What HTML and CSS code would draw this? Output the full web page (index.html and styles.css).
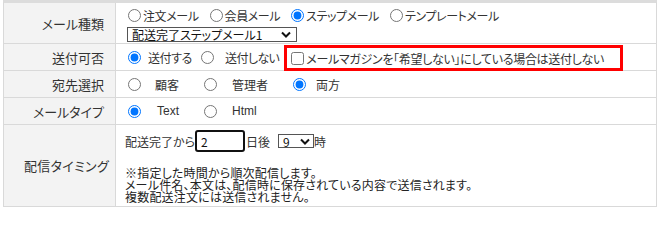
FILE: index.html
```html
<!DOCTYPE html>
<html lang="ja">
<head>
<meta charset="utf-8">
<link rel="stylesheet" href="styles.css">
</head>
<body>
<div class="form">
  <div class="label">メール種類</div>
  <div class="value v-kind">
    <div class="kind-line">
      <label class="opt"><input type="radio" name="kind"><span class="t-kind">注文メール</span></label>
      <label class="opt gap"><input type="radio" name="kind"><span class="t-kind">会員メール</span></label>
      <label class="opt gap"><input type="radio" name="kind" checked><span class="t-kind">ステップメール</span></label>
      <label class="opt gap"><input type="radio" name="kind"><span class="t-kind">テンプレートメール</span></label>
    </div>
    <div class="sel sel-long">
      <span class="sel-text">配送完了ステップメール1</span>
      <svg class="chev" width="10" height="7" viewBox="0 0 10 7"><path d="M1 1.5 L5 5.5 L9 1.5" fill="none" stroke="#111" stroke-width="2"/></svg>
    </div>
  </div>

  <div class="label">送付可否</div>
  <div class="value v-send">
    <label class="opt"><input type="radio" name="send" checked><span class="t-send1">送付する</span></label>
    <label class="opt gap-send"><input type="radio" name="send"><span class="t-send2">送付しない</span></label>
    <label class="mag"><input type="checkbox"><span class="t-mag">メールマガジンを「希望しない」にしている場合は送付しない</span></label>
  </div>

  <div class="label">宛先選択</div>
  <div class="value v-opts">
    <label class="opt col-a"><input type="radio" name="to"><span class="t-a">顧客</span></label>
    <label class="opt col-b"><input type="radio" name="to"><span class="t-b">管理者</span></label>
    <label class="opt"><input type="radio" name="to" checked><span class="t-c">両方</span></label>
  </div>

  <div class="label">メールタイプ</div>
  <div class="value v-opts">
    <label class="opt col-a"><input type="radio" name="type" checked><span class="t-text">Text</span></label>
    <label class="opt"><input type="radio" name="type"><span class="t-html">Html</span></label>
  </div>

  <div class="label label-wide">配信タイミング</div>
  <div class="value v-timing">
    <div class="timing-line">
      <span>配送完了から</span><input class="days" type="text" value="2"><span class="t-after">日後</span>
      <div class="sel sel-hour">
        <span class="sel-text">9</span>
        <svg class="chev" width="10" height="7" viewBox="0 0 10 7"><path d="M1 1.5 L5 5.5 L9 1.5" fill="none" stroke="#111" stroke-width="2"/></svg>
      </div><span>時</span>
    </div>
    <p class="notice">※指定した時間から順次配信します。<br>メール件名、本文は、配信時に保存されている内容で送信されます。<br>複数配送注文には送信されません。</p>
  </div>
</div>
</body>
</html>
```
FILE: styles.css
```css
html, body {
  margin: 0;
  padding: 0;
  background: #fff;
}
body {
  font-family: "Noto Sans CJK JP", "Noto Sans", sans-serif;
  font-size: 12px;
  color: #333;
  font-feature-settings: "palt";
}
.form {
  margin-left: 3px;
  width: 654px;
  box-sizing: border-box;
  border-top: 3px solid #dcdcdc;
  border-left: 1px solid #d9d9d9;
  border-right: 1px solid #d9d9d9;
  display: grid;
  grid-template-columns: 112px 1fr;
  grid-template-rows: 41px 27px 27px 27px 82px;
}
.label, .value {
  box-sizing: border-box;
  border-bottom: 1px solid #d9d9d9;
}
.label {
  background: #f3f3f3;
  border-right: 1px solid #d9d9d9;
  display: flex;
  align-items: center;
  justify-content: flex-end;
  padding-right: 11px;
  font-size: 13px;
  color: #333;
}
.label-wide {
  padding-right: 6px;
  letter-spacing: 0.3px;
}
.value {
  display: flex;
  align-items: center;
  padding-left: 12px;
  white-space: nowrap;
}
.opt {
  display: inline-flex;
  align-items: center;
}
input[type="radio"], input[type="checkbox"] {
  margin: 0;
  width: 13px;
  height: 13px;
}
.v-kind {
  display: block;
  padding-top: 4px;
}
.kind-line {
  height: 16px;
  display: flex;
  align-items: center;
}
.t-kind {
  margin-left: 2px;
  letter-spacing: -0.4px;
}
.gap { margin-left: 11px; }
.sel {
  display: flex;
  align-items: center;
  justify-content: space-between;
  box-sizing: border-box;
  border: 1px solid #555;
  background: #fff;
  color: #111;
}
.sel-long {
  margin-top: 4px;
  margin-left: -1px;
  width: 170px;
  height: 15px;
  padding: 0 5px 0 4px;
  font-size: 12px;
}
.chev { flex: none; }
.t-send1 {
  margin-left: 7px;
  letter-spacing: -0.4px;
}
.gap-send { margin-left: 9px; }
.t-send2 {
  margin-left: 11px;
  letter-spacing: -0.6px;
}
.mag {
  margin-left: 5px;
  margin-top: 2px;
  box-sizing: border-box;
  width: 339px;
  height: 26px;
  border: 3px solid #f00;
  display: flex;
  align-items: center;
  padding-left: 4px;
}
.mag input { margin-right: 2px; }
.t-mag {
  font-size: 12px;
  letter-spacing: -0.3px;
}
.col-a { width: 76px; }
.col-b { width: 89px; }
.t-a { margin-left: 14px; }
.t-b { margin-left: 15px; }
.t-c { margin-left: 10px; }
.t-text {
  margin-left: 16px;
  font-family: "Liberation Sans", sans-serif;
}
.t-html {
  margin-left: 15px;
  font-family: "Liberation Sans", sans-serif;
}
.v-timing {
  display: block;
  padding-left: 9px;
  padding-top: 5px;
}
.timing-line {
  display: flex;
  align-items: center;
  height: 22px;
}
.days {
  box-sizing: border-box;
  width: 50px;
  height: 22px;
  border: 2px solid #111;
  border-radius: 3px;
  padding: 0 4px;
  font: inherit;
  color: #111;
  outline: none;
}
.t-after { margin-left: 1px; }
.sel-hour {
  margin-left: 8px;
  width: 36px;
  height: 14px;
  padding: 0 3px 0 4px;
  font-size: 12px;
}
.notice {
  margin: 15px 0 0;
  line-height: 12px;
  font-size: 12px;
  letter-spacing: 0.2px;
  color: #222;
}
```
